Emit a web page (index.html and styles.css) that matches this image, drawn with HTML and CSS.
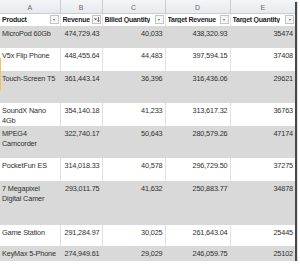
FILE: index.html
```html
<!DOCTYPE html>
<html lang="en">
<head>
  <meta charset="UTF-8">
  <meta name="viewport" content="width=device-width, initial-scale=1.0">
  <link rel="stylesheet" href="styles.css">
  <title>Product Revenue</title>
</head>
<body>
  <div class="sheet">
    <div class="marker"></div>
    <table class="grid">
      <colgroup>
        <col class="col-a"><col class="col-b"><col class="col-c"><col class="col-d"><col class="col-e">
      </colgroup>
      <tr class="letters">
        <th>A</th><th>B</th><th>C</th><th>D</th><th>E</th>
      </tr>
      <tr class="head">
        <th><div class="hd"><span>Product</span><i class="drop"></i></div></th>
        <th><div class="hd"><span>Revenue</span><i class="drop sorted"><svg width="7" height="7" viewBox="0 0 7 7"><path d="M0.8 2.5 L2.6 4.3 L4.2 2.5 Z" fill="#555"/><path d="M5.5 1 V5.6 M4.6 4.6 L5.5 5.8 L6.4 4.6" stroke="#555" stroke-width="0.8" fill="none"/></svg></i></div></th>
        <th><div class="hd"><span>Billed Quantity</span><i class="drop"></i></div></th>
        <th><div class="hd"><span>Target Revenue</span><i class="drop"></i></div></th>
        <th><div class="hd"><span>Target Quantity</span><i class="drop"></i></div></th>
      </tr>
      <tr class="band h22">
        <td>MicroPod 60Gb</td><td class="num">474,729.43</td><td class="num">40,033</td><td class="num">438,320.93</td><td class="num">35474</td>
      </tr>
      <tr class="h23">
        <td>V5x Flip Phone</td><td class="num">448,455.64</td><td class="num">44,483</td><td class="num">397,594.15</td><td class="num">37408</td>
      </tr>
      <tr class="band h32">
        <td>Touch-Screen T5</td><td class="num">361,443.14</td><td class="num">36,396</td><td class="num">316,436.06</td><td class="num">29621</td>
      </tr>
      <tr class="h21">
        <td>SoundX Nano<br>4Gb</td><td class="num">354,140.18</td><td class="num">41,233</td><td class="num">313,617.32</td><td class="num">36763</td>
      </tr>
      <tr class="band h32">
        <td>MPEG4<br>Camcorder</td><td class="num">322,740.17</td><td class="num">50,643</td><td class="num">280,579.26</td><td class="num">47174</td>
      </tr>
      <tr class="h23">
        <td>PocketFun ES</td><td class="num">314,018.33</td><td class="num">40,578</td><td class="num">296,729.50</td><td class="num">37275</td>
      </tr>
      <tr class="band h44">
        <td>7 Megapixel<br>Digital Camer</td><td class="num">293,011.75</td><td class="num">41,632</td><td class="num">250,883.77</td><td class="num">34878</td>
      </tr>
      <tr class="h21">
        <td>Game Station</td><td class="num">291,284.97</td><td class="num">30,025</td><td class="num">261,643.04</td><td class="num">25445</td>
      </tr>
      <tr class="band h17">
        <td>KeyMax 5-Phone</td><td class="num">274,949.61</td><td class="num">29,029</td><td class="num">246,059.75</td><td class="num">25102</td>
      </tr>
    </table>
  </div>
</body>
</html>
```

FILE: styles.css
```css
  body {
    margin: 0;
    background-color: white;
    font-family: "Liberation Sans", Arial, sans-serif;
  }

  .sheet {
    position: relative;
    width: 295px;
    height: 261px;
    overflow: hidden;
    background-color: white;
    box-shadow: 2px 2px 1px rgba(40, 40, 40, 0.85);
  }

  .marker {
    position: absolute;
    left: 0;
    top: 58px;
    width: 1px;
    height: 33px;
    background-color: #f2c45a;
  }

  .grid {
    width: 295px;
    table-layout: fixed;
    border-collapse: collapse;
    border-spacing: 0;
  }

  .col-a { width: 60px; }
  .col-b { width: 42px; }
  .col-c { width: 63px; }
  .col-d { width: 65px; }
  .col-e { width: 65px; }

  .grid td, .grid th {
    padding: 0;
    overflow: hidden;
    white-space: nowrap;
  }

  .letters {
    height: 13px;
  }

  .letters th {
    background: linear-gradient(#f3f5f8, #e6e9ee);
    border-left: 1px solid #c9cdd3;
    border-bottom: 1px solid #c9cdd3;
    color: #6a6a6a;
    font-weight: normal;
    font-size: 7px;
    line-height: 7px;
    padding-top: 4px;
    vertical-align: top;
  }

  .letters th:first-child {
    border-left: none;
  }

  .head {
    height: 13px;
  }

  .head th {
    background-color: white;
    border-left: 1px solid #e4e4e4;
    text-align: left;
    vertical-align: middle;
  }

  .head th:first-child {
    border-left: none;
  }

  .hd {
    display: flex;
    justify-content: space-between;
    align-items: center;
    gap: 1px;
    padding: 0 1px 0 2px;
    font-size: 7px;
    font-weight: bold;
    letter-spacing: -0.25px;
    color: #1e1e1e;
  }

  .hd span {
    overflow: hidden;
  }

  .drop {
    display: flex;
    justify-content: center;
    align-items: center;
    flex-shrink: 0;
    width: 7px;
    height: 7px;
    border: 1px solid #c4c4c4;
    background-color: #f7f7f7;
  }

  .drop::before {
    content: "";
    border-left: 1.5px solid transparent;
    border-right: 1.5px solid transparent;
    border-top: 2px solid #6c6c6c;
  }

  .drop.sorted::before {
    display: none;
  }

  .grid td {
    vertical-align: top;
    padding: 3px 2px 0 2px;
    font-size: 7.3px;
    line-height: 10px;
    letter-spacing: -0.15px;
    color: #303030;
    border-left: 1px solid #e1e1e1;
  }

  .grid td:first-child {
    border-left: none;
  }

  .band td {
    background-color: #d9d9d9;
    border-left-color: #d9d9d9;
  }

  .num {
    text-align: right;
  }

  .h17 { height: 17px; }
  .h21 { height: 21px; }
  .h22 { height: 22px; }
  .h23 { height: 23px; }
  .h32 { height: 32px; }
  .h44 { height: 44px; }
```
